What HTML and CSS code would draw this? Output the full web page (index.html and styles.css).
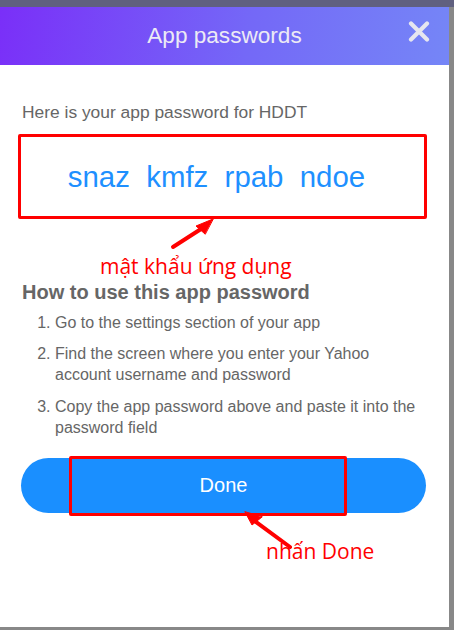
FILE: index.html
```html
<!DOCTYPE html>
<html lang="vi">
<head>
    <meta charset="UTF-8">
    <meta name="viewport" content="width=device-width, initial-scale=1.0">
    <title>App passwords</title>
    <link rel="stylesheet" href="styles.css">
</head>
<body>
    <div class="topbar"></div>
    <div class="modal">
        <div class="modal-header">
            <h2>App passwords</h2>
            <svg class="close" width="22" height="21" viewBox="0 0 22 21">
                <path d="M3 2.5 L19 18.5 M19 2.5 L3 18.5" stroke="#e6e6ef" stroke-width="4.2" stroke-linecap="round"/>
            </svg>
        </div>
        <div class="modal-body">
            <p class="intro">Here is your app password for HDDT</p>
            <div class="password-box">snaz&nbsp; kmfz&nbsp; rpab&nbsp; ndoe</div>
            <p class="note note-pass">mật khẩu ứng dụng</p>
            <h3>How to use this app password</h3>
            <ol class="steps">
                <li>Go to the settings section of your app</li>
                <li>Find the screen where you enter your Yahoo account username and password</li>
                <li>Copy the app password above and paste it into the password field</li>
            </ol>
            <div class="done-wrap">
                <button class="done-btn">Done</button>
                <div class="mark"></div>
            </div>
            <p class="note note-done">nhấn Done</p>
        </div>
        <!-- annotation arrows, coords relative to the modal -->
        <svg class="arrows" width="449" height="620" viewBox="0 0 449 620">
            <g stroke="#f00" stroke-width="4" stroke-linecap="round" fill="#f00">
                <line x1="173" y1="240" x2="201" y2="222"/>
                <polygon points="213,212 196,219 205,227" stroke-width="1"/>
                <line x1="290" y1="540" x2="252" y2="512"/>
                <polygon points="245,505 252,518 262,510" stroke-width="1"/>
            </g>
        </svg>
    </div>
</body>
</html>
```

FILE: styles.css
```css
body {
    margin: 0;
    background: #888;
    font-family: "Liberation Sans", Arial, sans-serif;
    color: #666;
}
.topbar {
    height: 7px;
    background: #60607f;
}
.modal {
    position: relative;
    width: 449px;
    height: 620px;
    background: #fff;
}
.modal-header {
    position: relative;
    height: 58px;
    display: flex;
    align-items: center;
    justify-content: center;
    background: linear-gradient(100deg, #7a2ff8 0%, #7468f7 55%, #7586f7 100%);
}
.modal-header h2 {
    margin: 0;
    font-size: 22.6px;
    font-weight: normal;
    color: #eceaf5;
}
.close {
    position: absolute;
    right: 19px;
    top: 14px;
}
.modal-body {
    padding: 0 22px;
}
.intro {
    margin: 0;
    padding-top: 37px;
    font-size: 17.4px;
    line-height: 21px;
}
.password-box {
    margin: 11px 0 0 -4px;
    width: 391px;
    height: 79px;
    padding-right: 12px;
    border: 3px solid #f00;
    border-radius: 2px;
    display: flex;
    align-items: center;
    justify-content: center;
    font-size: 29.4px;
    color: #1e90ff;
}
.note {
    margin: 0;
    color: #f00;
    font-family: "Open Sans", sans-serif;
    font-size: 21px;
}
.note-pass {
    padding: 34px 0 0 78px;
    line-height: 26px;
}
h3 {
    margin: 2px 0 0;
    font-size: 20px;
    line-height: 22px;
}
.steps {
    margin: 9px 0 0;
    padding-left: 33px;
    font-size: 16px;
    line-height: 21px;
}
.steps li {
    margin-bottom: 10px;
}
.steps li:nth-child(2) {
    margin-bottom: 11px;
}
.done-wrap {
    position: relative;
    margin: 20px 0 0 -1px;
}
.done-btn {
    width: 405px;
    height: 55px;
    border: 0;
    border-radius: 28px;
    background: #1a8fff;
    color: #fff;
    font-family: "Liberation Sans", Arial, sans-serif;
    font-size: 20px;
}
.mark {
    position: absolute;
    left: 48px;
    top: -2px;
    width: 272px;
    height: 54px;
    border: 3px solid #f00;
    border-radius: 2px;
}
.note-done {
    padding: 25px 0 0 244px;
    line-height: 26px;
}
.arrows {
    position: absolute;
    left: 0;
    top: 0;
    pointer-events: none;
}
```
